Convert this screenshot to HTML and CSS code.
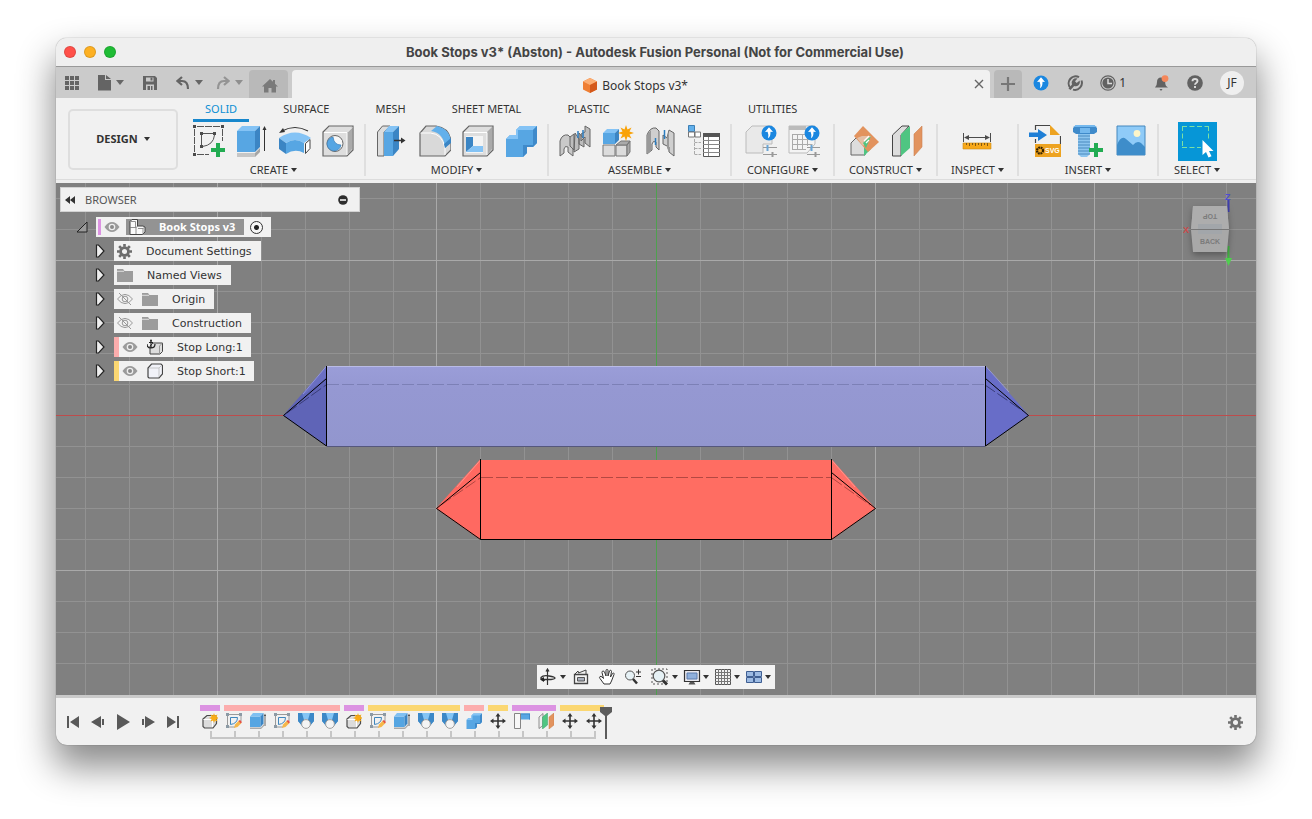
FILE: index.html
```html
<!DOCTYPE html>
<html lang="en">
<head>
<meta charset="utf-8">
<title>Book Stops v3*</title>
<link rel="stylesheet" href="styles.css">
</head>
<body>
<svg class="defs" aria-hidden="true">
  <symbol id="t-new" viewBox="0 0 16 16"><path d="M1 6 5 2.500h8l1.500 2v6L11 15H2.500L1 13.500z" fill="#dcdcdc" stroke="#4c4c4c" stroke-width="1.200"/><path d="M1.500 6.500h9L14 4M10.500 6.500V14" fill="none" stroke="#fff"/><path d="m12 0 .9 2.600L15.500 1.500 14.400 4 17 5l-2.600 1 1.100 2.500-2.600-1.100L12 10l-.9-2.600-2.600 1.100L9.600 6 7 5l2.600-1-1.100-2.500 2.600 1.100z" fill="#f9ab15"/></symbol>
  <symbol id="t-sketch" viewBox="0 0 16 16"><path d="M1.500 1v13H9M1 1.500h14V8" fill="none" stroke="#9a9a9a"/><path d="M4.500 4.500v7M4.500 4.500h7q0 6-7 7" fill="none" stroke="#3f86bd"/><path d="M0 0h3v3H0zM13 0h3v3h-3zM0 12h3v3H0z" fill="#8c9aa5"/><path d="m8 15 1-3.500 4-4 2.500 2.500-4 4z" fill="#f5b74b"/><path d="m12.500 8 1.500-1 2 2-1.200 1.500z" fill="#e34f45"/></symbol>
  <symbol id="t-extrude" viewBox="0 0 16 16"><path d="M0 14.500 11 14.500 14 11V13L11 16H0z" fill="#a9a9a9"/><path d="M0 3.500h10.500V14H0z" fill="#55a5e2"/><path d="M0 3.500 3 0h10.500l-3 3.500z" fill="#7fc0f2"/><path d="m10.500 3.500 3-3.500v10.500l-3 3.500z" fill="#3b85c4"/><path d="M15 2v11" stroke="#444" stroke-width=".8"/><path d="m15 .5 1 2.500h-2z" fill="#444"/></symbol>
  <symbol id="t-loft" viewBox="0 0 16 16"><path d="M0 0h16v8l-4 5H4L0 8z" fill="#3f8ccb"/><path d="M3 0h10l-2 8H5z" fill="#84c5f5"/><path d="M0 0h4l2 7-3 4-3-3zM16 0h-4l-2 7 3 4 3-3z" fill="#3c88c7"/><circle cx="8" cy="11" r="4.400" fill="#f4f4f4" stroke="#a0a0a0"/></symbol>
  <symbol id="t-combine" viewBox="0 0 32 32"><path d="M1 14 5 10h6V5l4-4h17v17l-4 4h-6v6l-4 4H1z" fill="#57a6e3"/><path d="m1 14 4-4h6V5l4-4h17l-4 4H13v9z" fill="#84c3f5"/><path d="m28 5 4-4v17l-4 4h-6v6l-4 4V20h10z" fill="#3f8aca"/></symbol>
  <symbol id="t-move" viewBox="0 0 16 16"><path d="M8 2v12M2 8h12" stroke="#333" stroke-width="1.600"/><path d="M8 0 5.500 3.500h5zM8 16l-2.500-3.500h5zM0 8l3.500-2.500v5zM16 8l-3.500-2.500v5z" fill="#333"/></symbol>
  <symbol id="t-align" viewBox="0 0 16 16"><path d="M.5.500h6v15h-6z" fill="#f7f7f7" stroke="#858585"/><path d="M7 .5h9v6H7z" fill="#57a6e3"/><path d="M7 .5h9v1H7zM15 .5h1v6h-1z" fill="#3f8aca"/></symbol>
  <symbol id="t-plane" viewBox="0 0 16 16"><path d="M1 4 5 .5v12L1 15.500z" fill="#eee" stroke="#777" stroke-width=".8"/><path d="m4.500 4 5-4v12l-5 4z" fill="#4fc582" stroke="#399f65" stroke-width=".5"/><path d="m11 4 5-4v12l-5 4z" fill="#e2935e" stroke="#c67c4a" stroke-width=".5"/></symbol>
  <symbol id="up" viewBox="0 0 16 16"><circle cx="8" cy="8" r="7.500" fill="#1b87e0"/><path d="M8 2.300 12 7l-2.500-.2Q9.700 12 7 13.200 8 10 6.600 6.800L4 7z" fill="#fff"/></symbol>
  <symbol id="eye" viewBox="0 0 16 12"><path d="M.5 6q3.500-5 7.500-5t7.500 5q-3.500 5-7.500 5T.5 6z" fill="#9b9b9b"/><circle cx="8" cy="6" r="3.300" fill="#eee"/><circle cx="8" cy="6" r="2" fill="#8a8a8a"/></symbol>
  <symbol id="eye-off" viewBox="0 0 16 12"><path d="M.5 6q3.500-4.600 7.500-4.600t7.500 4.600q-3.500 4.600-7.500 4.600T.5 6zM2 0l12 12" fill="none" stroke="#999"/><circle cx="8" cy="6" r="2.800" fill="none" stroke="#999"/></symbol>
  <symbol id="folder" viewBox="0 0 16 14"><path d="M0 1h6l1.500 2H16v11H0z" fill="#9c9c9c"/><path d="M0 3.300h7" stroke="#efefef" stroke-width=".8"/></symbol>
  <symbol id="gear" viewBox="0 0 16 16"><circle cx="8" cy="8" r="4.200" fill="none" stroke="currentColor" stroke-width="3"/><path d="M8 0v3M8 13v3M0 8h3M13 8h3M2.300 2.300l2.200 2.200M11.500 11.500l2.200 2.200M2.300 13.700l2.200-2.200M11.500 4.500l2.200-2.200" stroke="currentColor" stroke-width="2.800"/></symbol>
  <symbol id="twist" viewBox="0 0 10 14"><path d="M1.500 1h2l5.500 6-5.500 6h-2z" fill="#eee" stroke="#242424" stroke-width="1.200"/></symbol>
</svg>

<main class="window">
  <header class="titlebar">
    <div class="lights">
      <button class="light red" aria-label="Close"></button>
      <button class="light amber" aria-label="Minimize"></button>
      <button class="light green" aria-label="Zoom"></button>
    </div>
    <h1>Book Stops v3* (Abston) - Autodesk Fusion Personal (Not for Commercial Use)</h1>
  </header>

  <div class="tabbar">
    <div class="quick">
      <button aria-label="Data panel"><svg width="14" height="14" fill="#646464"><path d="M0 0h4v4H0zM5 0h4v4H5zM10 0h4v4h-4zM0 5h4v4H0zM5 5h4v4H5zM10 5h4v4h-4zM0 10h4v4H0zM5 10h4v4H5zM10 10h4v4h-4z"/></svg></button>
      <button class="drop file" aria-label="File"><svg width="14" height="16" fill="#646464"><path d="M1 0h7v5h6v10.500H1zM9 0l5 4H9z"/></svg><i class="caret"></i></button>
      <button class="save" aria-label="Save"><svg width="14" height="14"><path d="M0 0h12l2 2v12H0z" fill="#646464"/><path d="M3 1.500h7.500v4H3zM3 8.500h8V14H3z" fill="#cbcbcb"/><path d="M7.500 1.500h2v3h-2zM4.500 10H7v4H4.500zM8 10h1.500v4H8z" fill="#646464"/></svg></button>
      <button class="drop undo" aria-label="Undo"><svg width="14" height="14"><path d="M6 1 1.500 5 6 9M1.500 5H6q6 0 6 8" fill="none" stroke="#646464" stroke-width="2.200"/></svg><i class="caret"></i></button>
      <button class="drop redo" aria-label="Redo"><svg width="14" height="14"><path d="M8 1l4.500 4L8 9M12.500 5H8q-6 0-6 8" fill="none" stroke="#949494" stroke-width="2.200"/></svg><i class="caret pale"></i></button>
    </div>
    <button class="home" aria-label="Home"><svg width="16" height="14"><path d="M8 0 11 2.800V1h2v3.700L16 7.500h-2V13.500H9.500V9h-3v4.500H2v-6H0z" fill="#7a7a7a"/></svg></button>
    <div class="doc">
      <svg width="16" height="17" viewBox="0 0 16 17"><path d="m8 1 7 3.500v8L8 16l-7-3.500v-8z" fill="#ef7e33"/><path d="m8 1 7 3.500L8 8 1 4.500z" fill="#fcae74"/><path d="M8 8v8l7-3.500v-8z" fill="#d4591b"/></svg>
      <span>Book Stops v3*</span>
      <button class="close" aria-label="Close tab"><svg width="10" height="10"><path d="m1 1 8 8M9 1 1 9" stroke="#666" stroke-width="1.400"/></svg></button>
    </div>
    <button class="plus" aria-label="New design"><svg width="14" height="14"><path d="M7 0v14M0 7h14" stroke="#777" stroke-width="2.200"/></svg></button>
    <div class="status">
      <button class="updates" aria-label="Updates"><svg width="16" height="16"><use href="#up"/></svg></button>
      <button aria-label="Extensions"><svg width="16" height="16"><path d="M3 12.500A7 7 0 0 1 12 2.200M14.500 5.500A7 7 0 0 1 6 14.600" fill="none" stroke="#626262" stroke-width="2"/><path d="M1.500 13.500 5 9.500q-1-3 1-5 2-1.800 4.500-1L8 6.300 9.700 8l3-2.500q.8 2.500-1 4.500-2 1.800-4.500 1L3.500 15z" fill="#626262"/></svg></button>
      <button class="jobs" aria-label="Job status"><svg width="16" height="16"><circle cx="8" cy="8" r="7.200" fill="none" stroke="#626262" stroke-width="1.200"/><circle cx="8" cy="8" r="5.600" fill="#626262"/><path d="M8 4v4.500h4" fill="none" stroke="#ddd" stroke-width="1.500"/></svg><span>1</span></button>
      <button class="bell" aria-label="Notifications"><svg width="16" height="16"><path d="M1 12.500Q3 11 3 7q0-4.500 4-4.500T11.200 7Q11 11 14 12.500z" fill="#626262"/><path d="M5.500 14h3L7 16z" fill="#626262"/><circle cx="11" cy="3.600" r="3.400" fill="#f5875a"/></svg></button>
      <button class="help" aria-label="Help"><svg width="16" height="16"><circle cx="8" cy="8" r="7.800" fill="#626262"/><path d="M5.500 6.300Q5.500 4 8 4t2.500 2.100q0 1.200-1.300 1.900-1.200.7-1.200 1.800M8 11v2" fill="none" stroke="#ddd" stroke-width="1.900"/></svg></button>
      <button class="avatar">JF</button>
    </div>
  </div>

  <section class="ribbon">
    <button class="design">DESIGN <i class="caret dark"></i></button>
    <div class="tools">
      <nav class="tabs">
        <button class="on">SOLID</button><button>SURFACE</button><button>MESH</button><button>SHEET METAL</button><button>PLASTIC</button><button>MANAGE</button><button>UTILITIES</button>
      </nav>
      <div class="groups">
        <div class="group first">
          <div class="icons">
            <button aria-label="Create Sketch"><svg width="32" height="32"><path d="M1.500 4v23M4 1.500h23M29.500 4v12M4 29.500h12" fill="none" stroke="#555" stroke-dasharray="7 1"/><path d="M8.500 10v10M9 8.500h11M21.500 10q-1 10-12 11.500" fill="none" stroke="#555"/><path d="M0 0h3v3H0zM28 0h3v3h-3zM0 28h3v3H0zM7 7h3v3H7zM20 7h3v3h-3zM7 20h3v3H7z" fill="#4b4b4b"/><path d="M23 18h4v5h5v4h-5v5h-4v-5h-5v-4h5z" fill="#22ac52"/></svg></button>
            <button aria-label="Extrude"><svg width="32" height="32"><path d="M1 28h18l5-5v4l-5 5H1z" fill="#a5a5a5"/><path d="M1 28h18v4H1z" fill="#c6c6c6"/><path d="M1 6h18v21H1z" fill="#57a6e3"/><path d="m1 6 5-5h18l-5 5z" fill="#84c3f5"/><path d="m19 6 5-5v21l-5 5z" fill="#3b85c4"/><path d="M28.500 3v23" stroke="#333"/><path d="m28.500 1 2 4h-4z" fill="#333"/></svg></button>
            <button aria-label="Revolve"><svg width="32" height="32"><path d="M3 6Q16-1 29 6" fill="none" stroke="#333" stroke-width="1.200"/><path d="m0 8 4-5 2 4z" fill="#333"/><path d="M0 13q16-11 32 0l-7 5q-9-6-18 0z" fill="#84c3f5"/><path d="m0 13 7 5v11l-7-5z" fill="#3b85c4"/><path d="M7 18q9-6 18 0v10q-9-5-18 1z" fill="#57a6e3"/><path d="m26.500 18.500 4.500-4v9l-4.500 5z" fill="#fff" stroke="#444"/></svg></button>
            <button aria-label="Hole"><svg width="32" height="32"><path d="M1 31V7l6-6h24v24l-6 6z" fill="#dedede" stroke="#666" stroke-width="1.200"/><path d="m25 7 5-5v22l-5 6z" fill="#aaa"/><path d="M2 7.500h23M25 7.500V30M25 7.500l5-5" fill="none" stroke="#fff"/><circle cx="13" cy="18.500" r="8" fill="#f7f7f7" stroke="#666"/><path d="M11 12a7 7 0 1 0 8 8q-7 0-8-8z" fill="#57a6e3" stroke="#3b7db5" stroke-width=".7"/></svg></button>
          </div>
          <button class="label">CREATE<i class="caret dark"></i></button>
        </div>
        <div class="group">
          <div class="icons">
            <button aria-label="Press Pull"><svg width="32" height="32"><path d="M1.500 31V7l5-6H14L8 7v24z" fill="#ddd" stroke="#666"/><path d="M8 7h9v24H8z" fill="#57a6e3"/><path d="m8 7 5-6h10l-6 6z" fill="#84c3f5"/><path d="m17 7 6-6v23l-6 7z" fill="#3b85c4"/><path d="M18 15.500h8" stroke="#333" stroke-width="1.400"/><path d="m25 12.500 4.500 3-4.500 3z" fill="#333"/></svg></button>
            <button aria-label="Fillet"><svg width="32" height="32"><path d="M1 31V8l6-7h10q14 2 15 16v8l-6 6z" fill="#d9d9d9" stroke="#666" stroke-width="1.200"/><path d="M1.500 8h10q12 1 14.500 15v7" fill="none" stroke="#fff"/><path d="m12 6 6-5q13 3 14 16l-6 6Q25 8 12 6z" fill="#62b0eb"/><path d="m25 19 7-6v5l-6 5z" fill="#3b85c4"/></svg></button>
            <button aria-label="Shell"><svg width="32" height="32"><path d="M1 31V7l6-6h24v24l-6 6z" fill="#dedede" stroke="#666" stroke-width="1.200"/><path d="m25 7 5-5v22l-5 6z" fill="#aaa"/><path d="M2 7.500h23V30" fill="none" stroke="#fff"/><path d="M4 11h17v17H4z" fill="#f4f4f4"/><path d="M4 12h7v9l-7 6z" fill="#3b85c4"/><path d="M11 21h10v6H4z" fill="#84c3f5"/></svg></button>
            <button aria-label="Combine"><svg width="32" height="32"><use href="#t-combine"/></svg></button>
          </div>
          <button class="label">MODIFY<i class="caret dark"></i></button>
        </div>
        <div class="group">
          <div class="icons">
            <button aria-label="Joint Origin"><svg width="32" height="32"><path d="M1 31V16q2-7 8-6l5 5v16l-5-4v-5q-3-2-4 2v4z" fill="#c9c9c9" stroke="#656565"/><path d="m11 12 4-3v16l-4-4zM16 8l4 6v10l-5 3zM20 8l5 6v8l-5-3zM26 1l5 3v18l-5-4V12l-4 4V9l4-2z" fill="#bdbdbd" stroke="#656565"/><path d="M19 6v7M24 5v8" stroke="#2b7dc0" stroke-width="1.500"/></svg></button>
            <button aria-label="New Component"><svg width="32" height="32"><path d="M1 20h12v11H1zM14 20h11v11H14z" fill="#dcdcdc" stroke="#777"/><path d="m14 20 5-4h9l-3 4zM25 20l3-4v11l-3 4z" fill="#aaa" stroke="#777"/><path d="M1 8h12v11H1z" fill="#57a6e3"/><path d="m1 8 4-4h12l-4 4z" fill="#84c3f5"/><path d="m13 8 4-4v11l-4 4z" fill="#3b85c4"/><path d="m24 0 1.500 4.500 4-2-2 4L32 8l-4.500 1.500 2 4-4-2L24 16l-1.500-4.500-4 2 2-4L16 8l4.500-1.500-2-4 4 2z" fill="#f9a207"/></svg></button>
            <button aria-label="Joint"><svg width="32" height="32"><path d="M2 29V10q3-8 9-7l3 3v19l-3-3v-5q-3-2-4 2v6z" fill="#cfcfcf" stroke="#656565"/><path d="m18 10 4 3 2-8 5 3v23l-5-4v-5l-6-3z" fill="#cfcfcf" stroke="#656565"/><path d="M2 29V10l4-5v21zM24 6v21l-2-4V13z" fill="#999"/><path d="M10.500 13v7M19.500 5v9" stroke="#2b7dc0" stroke-width="1.500"/></svg></button>
            <button aria-label="Bill of Materials"><svg width="32" height="32"><path d="M.5.500h6v6h-6z" fill="#62b0eb" stroke="#3c7fb5"/><path d="M.5 7h6v5h-6zM7 7h5.500v5H7z" fill="#fff" stroke="#777"/><path d="M6.500 14v16M6.500 17.500H13M6.500 23.500H13M6.500 29.500H13" stroke="#aaa" stroke-dasharray="3 1" fill="none"/><path d="M15.500 8.500h16v23h-16z" fill="#fff" stroke="#555"/><path d="M15 8h17v4H15z" fill="#555"/><path d="M15 15.500h17M15 19.500h17M15 23.500h17M15 27.500h17M20.500 12v19" stroke="#888"/></svg></button>
          </div>
          <button class="label">ASSEMBLE<i class="caret dark"></i></button>
        </div>
        <div class="group short">
          <div class="icons">
            <button aria-label="Configure"><svg width="32" height="32"><path d="M1 28V7l6-6h20v18H18v9z" fill="#e9e9e9" stroke="#bbb"/><path d="M18 22.500h14M18 29.500h14" stroke="#999"/><path d="M22.500 20v6" stroke="#6aa6d6" stroke-width="2"/><path d="M27.500 27v5" stroke="#999" stroke-width="2"/><use href="#up" x="16" y="0" width="16" height="16"/></svg></button>
            <button aria-label="Configuration Table"><svg width="32" height="32"><path d="M1 1h26v18l-8 9H1z" fill="#f4f4f4" stroke="#bbb"/><path d="M1 1h17v4H1z" fill="#bbb"/><path d="M4.500 9.500h20M4.500 14.500h20M4.500 19.500h20M4.500 24.500H18M4.500 9v16M9.500 9v16M14.500 9v16M19.500 9v12" stroke="#aaa" fill="none"/><path d="M19 22.500h13M19 29.500h13" stroke="#999"/><path d="M23.500 20v6" stroke="#6aa6d6" stroke-width="2"/><path d="M27.500 27v5" stroke="#999" stroke-width="2"/><use href="#up" x="16" y="0" width="16" height="16"/></svg></button>
          </div>
          <button class="label">CONFIGURE<i class="caret dark"></i></button>
        </div>
        <div class="group short">
          <div class="icons">
            <button aria-label="Offset Plane"><svg width="32" height="32"><path d="M3 30V18l5-5h12l-3 17z" fill="#ddd" stroke="#666"/><path d="M16 20h7v4l-7 7z" fill="#4fc582"/><path d="M15 1 31 17 20 27 6 11z" fill="#e2935e"/><path d="m9 13 5-2h9l-5 7-3 3z" fill="#e6ccb8" opacity=".8"/><path d="m15 18 8-7-5 12z" fill="#4fc582"/><path d="m16 16 5-5M18 18l3-3" stroke="#fff" stroke-width="1.200"/></svg></button>
            <button aria-label="Midplane"><svg width="32" height="32"><path d="M1.500 31V10L11 1h7L10 10v21z" fill="#ddd" stroke="#444"/><path d="m10 9 9-8v22l-9 8z" fill="#4fc582"/><path d="m23 9 8-8v21l-8 9z" fill="#e2935e" stroke="#cc8250" stroke-width=".6"/></svg></button>
          </div>
          <button class="label">CONSTRUCT<i class="caret dark"></i></button>
        </div>
        <div class="group short">
          <div class="icons">
            <button aria-label="Measure"><svg width="32" height="32"><path d="M2.500 8v9M29.500 8v9M4 12.500h24" stroke="#4c4c4c"/><path d="m3 12.500 5-2.500v5zM29 12.500 24 10v5z" fill="#4c4c4c"/><path d="M2 18h28v6H2z" fill="#f7a81b" stroke="#cf8a12" stroke-width=".6"/><path d="M5.500 18v2M8.500 18v3M11.500 18v2M14.500 18v3M17.500 18v2M20.500 18v3M23.500 18v2M26.500 18v3" stroke="#805813"/></svg></button>
          </div>
          <button class="label">INSPECT<i class="caret dark"></i></button>
        </div>
        <div class="group">
          <div class="icons">
            <button aria-label="Insert SVG"><svg width="32" height="32"><path d="M6.500 5V.5H21M31.500 11v8" fill="none" stroke="#444" stroke-width="1.200"/><path d="M6.500 14v4" stroke="#444" stroke-width="1.200"/><path d="M21 0v10h10z" fill="#eda321"/><path d="M0 7.500h9V4l9 6-9 6v-4H0z" fill="#1f7fd6"/><path d="M6 19h26v13H6z" fill="#eda321"/><circle cx="11" cy="25.500" r="3" fill="none" stroke="#332200" stroke-width="2.200" stroke-dasharray="1.800 .6"/><text x="16" y="28" class="svgtag">SVG</text></svg></button>
            <button aria-label="Insert Fastener"><svg width="32" height="32"><path d="M6 8h12v21l-3 3H9l-3-3z" fill="#8cc5ef"/><path d="M6 11h12M6 14h12M6 17h12M6 20h12M6 23h12M6 26h12M6 29h12" stroke="#4a8abf"/><path d="m1 3 3-3h18l3 3v4l-3 2H4L1 7z" fill="#3f8aca"/><path d="M1 2h24l-3-2H4zM8 3h10v5H8z" fill="#75b9ee"/><path d="M22 18h4v5h5v4h-5v5h-4v-5h-5v-4h5z" fill="#22ac52"/></svg></button>
            <button aria-label="Canvas"><svg width="32" height="32"><path d="M2 1h28v29H2z" fill="#8fcbf8" stroke="#4587bd"/><path d="M2 20Q6 10 11 14l7 6q4-5 8-2l4 4v8H2z" fill="#3e8dca"/><circle cx="22" cy="8.500" r="3.400" fill="#fdf6c9"/></svg></button>
          </div>
          <button class="label">INSERT<i class="caret dark"></i></button>
        </div>
        <div class="group select">
          <div class="icons">
            <button class="picked" aria-label="Select"><svg width="39" height="39"><path d="M4 4.500h27M4.500 4v21M30.500 4v14M4 25.500h19" fill="none" stroke="#7be0a4" stroke-dasharray="5 2.500"/><path d="M24.500 18v15l3.500-3 2.500 5.500 3-1.300-2.500-5.200h4.500z" fill="#fff"/></svg></button>
          </div>
          <button class="label">SELECT<i class="caret dark"></i></button>
        </div>
      </div>
    </div>
  </section>

  <section class="canvas">
    <svg class="scene" viewBox="56 183 1200 512" preserveAspectRatio="xMidYMid slice">
      <defs><linearGradient id="lg" x1="0" y1="0" x2="0" y2="1"><stop offset="0" stop-color="#9a9dd8"/><stop offset=".3" stop-color="#9598d2"/><stop offset="1" stop-color="#9296ce"/></linearGradient></defs>
      <path class="grid" d="M85.500 183v512M129.500 183v512M173.500 183v512M261.500 183v512M305.500 183v512M349.500 183v512M393.500 183v512M480.500 183v512M524.500 183v512M568.500 183v512M612.500 183v512M700.500 183v512M743.500 183v512M787.500 183v512M831.500 183v512M919.500 183v512M963.500 183v512M1007.500 183v512M1051.500 183v512M1138.500 183v512M1182.500 183v512M1226.500 183v512M56 198.500h1200M56 229.500h1200M56 291.500h1200M56 322.500h1200M56 353.500h1200M56 384.500h1200M56 446.500h1200M56 477.500h1200M56 508.500h1200M56 539.500h1200M56 601.500h1200M56 632.500h1200M56 663.500h1200"/>
      <path class="grid major" d="M217.500 183v512M436.500 183v512M875.500 183v512M1094.500 183v512M56 260.500h1200M56 570.500h1200"/>
      <path d="M56 415.500h1200" stroke="#bd4c4c"/>
      <path d="M656.500 183v512" stroke="#4fa04f"/>
      <path d="M326.500 366 283 415.500 326.500 446z" fill="#5f64b7"/><path d="M326.500 366 302 396l24.500-18z" fill="#6a6fc2"/>
      <path d="M985.500 366 1029 415.500 985.500 446z" fill="#686dc8"/>
      <path d="M326.500 366h659v80h-659z" fill="url(#lg)"/>
      <path d="M327 366.500h658" stroke="#b9bbe6"/><path d="M327 446.500h658" stroke="#55577c"/>
      <path d="M326.500 366 303 394M985.500 366 1009 392" stroke="#9da0e4" stroke-width=".8"/>
      <path class="hidden" d="M327 384.500h658" stroke="#7c80b6"/><path class="hidden" d="M287 413 326 385M985 385l38 26" stroke="#393c78"/>
      <path class="edge" d="M326.500 366v80L283.500 415.500 326.500 378.500M985.500 366v80l43-30.500L985.500 378.500"/>
      <path d="M480.500 459 436 508.500 480.500 540z" fill="#ff6961"/><path d="M831.500 459 875.500 508.500 831.500 540z" fill="#ff6e66"/>
      <path d="M480.500 460h351v80h-351z" fill="#ff6d62"/>
      <path d="M480.500 460 457 487M831.500 460 855 487" stroke="#ff9d94" stroke-width=".8"/>
      <path class="hidden" d="M481 477.500h350M441 505l39-27M832 478l38 27" stroke="#b44842"/>
      <path class="edge" d="M480.500 459v80.500L436.500 508.500 480.500 472.500M831.500 459v80.500l44-31-44-36M480.500 539.500h351"/>
    </svg>

    <aside class="browser">
      <header><button aria-label="Collapse"><svg width="10" height="8"><path d="M5 0v8L0 4zM10 0v8L5 4z" fill="#333"/></svg></button><h2>BROWSER</h2><button aria-label="Hide"><svg width="10" height="10"><circle cx="5" cy="5" r="4.800" fill="#2d2d2d"/><path d="M2 5h6" stroke="#fff" stroke-width="1.600"/></svg></button></header>
      <ul class="tree">
        <li class="root"><button aria-label="Collapse node"><svg width="12" height="12"><path d="M11 1v10H1z" fill="#9a9a9a" stroke="#222"/></svg></button>
          <div class="node"><b class="stripe violet"></b><svg width="16" height="12"><use href="#eye"/></svg><span class="chosen"><svg width="17" height="16"><path d="M1 6V2.500L3 .5h5.500V7H14l2 1v5l-2.500 2.500H1z" fill="#fafafa" stroke="#444"/><path d="M1 8.500h6V15M7 8.500l2-1.500M9 9.500h5V15M14 9.500l2-1.500M1.500 2.500h5V8" fill="none" stroke="#777" stroke-width=".8"/></svg>Book Stops v3</span><input type="radio" checked aria-label="Activate Book Stops v3"></div></li>
        <li><button aria-label="Expand"><svg width="10" height="14"><use href="#twist"/></svg></button><div class="node"><svg class="gear" width="15" height="15"><use href="#gear"/></svg><span>Document Settings</span></div></li>
        <li><button aria-label="Expand"><svg width="10" height="14"><use href="#twist"/></svg></button><div class="node"><svg width="16" height="14"><use href="#folder"/></svg><span>Named Views</span></div></li>
        <li><button aria-label="Expand"><svg width="10" height="14"><use href="#twist"/></svg></button><div class="node"><svg width="16" height="12"><use href="#eye-off"/></svg><svg width="16" height="14"><use href="#folder"/></svg><span>Origin</span></div></li>
        <li><button aria-label="Expand"><svg width="10" height="14"><use href="#twist"/></svg></button><div class="node"><svg width="16" height="12"><use href="#eye-off"/></svg><svg width="16" height="14"><use href="#folder"/></svg><span>Construction</span></div></li>
        <li><button aria-label="Expand"><svg width="10" height="14"><use href="#twist"/></svg></button><div class="node part"><b class="stripe pink"></b><svg width="16" height="12"><use href="#eye"/></svg><svg width="16" height="16"><path d="M3 7 6 4h9.500v8.500L13 15H3z" fill="#ddd" stroke="#444"/><path d="M12.500 7v8M12.500 7 15 4.500" stroke="#999"/><path d="M4 2v7M2 3.500h4M0 5q0 4 4 4t4-4" fill="none" stroke="#222" stroke-width="1.200"/><circle cx="4" cy="1.500" r="1" fill="#222"/></svg><span>Stop Long:1</span></div></li>
        <li><button aria-label="Expand"><svg width="10" height="14"><use href="#twist"/></svg></button><div class="node part"><b class="stripe gold"></b><svg width="16" height="12"><use href="#eye"/></svg><svg width="16" height="16"><path d="M1 14V5l3.500-4H14l1.500 1.500V11L12 15H2z" fill="#f1f2f8" stroke="#444" stroke-width="1.200"/><path d="M12 5v9M12 5l3-3M2 5h10" fill="none" stroke="#bbb" stroke-width=".8"/></svg><span>Stop Short:1</span></div></li>
      </ul>
    </aside>

    <svg class="cube" width="64" height="84" viewBox="1176 188 64 84">
      <path d="M1228.500 200v12" stroke="#3f3fae" stroke-width="2"/><text x="1225" y="200" class="axis" fill="#4e4ed0">Z</text>
      <text x="1183" y="233" class="axis" fill="#d04b4b">X</text>
      <path d="M1228.500 246v14" stroke="#43b843" stroke-width="2"/><path d="M1225 258h7l-3.500 8z" fill="#4fd04f"/>
      <path class="cubeface" d="M1193 206h34l2 24-2 22h-34l-2-22z" fill="#a8a8a8"/>
      <path d="M1193 206h34l2 24h-38z" fill="#adadad"/><path d="M1198 224h24v10h-24z" fill="#a2a6aa"/>
      <path d="M1191 229.500h38" stroke="#777"/>
      <text class="facetext" x="1210" y="219" transform="rotate(180 1210 216.500)">TOP</text>
      <text class="facetext" x="1210" y="244">BACK</text>
    </svg>

    <div class="navbar">
      <button aria-label="Orbit"><svg width="18" height="18"><path d="M8.500 1v16M7 3.500 8.500 1 10 3.500" stroke="#333" fill="none" stroke-width="1.200"/><path d="M6 12.500Q1 11 2 9.500 4 7 10 8q6 1 6 2t-4 1.500H5" fill="none" stroke="#333" stroke-width="1.300"/><path d="m1 11.500 4-2.500v5z" fill="#222"/></svg><i class="caret dark"></i></button>
      <button class="look" aria-label="Look At"><svg width="18" height="18"><path d="M2.500 6.500h13v9h-13z" fill="#f5f5f5" stroke="#444" stroke-width="1.300"/><path d="M5.500 9.500h7v3.500h-7z" fill="#aab0bd" stroke="#555"/><path d="m3 6 3-3 .5 2L14 2v4" fill="none" stroke="#444"/></svg></button>
      <button class="pan" aria-label="Pan"><svg width="18" height="18"><path d="M6 16 2 10.500q-1-1.500 0-2t2 .5l1.500 1.500L4 4.500q0-1.500 1-1.500t1.500 1L8 8V2.500q0-1 1-1t1 1V8l1.500-5q.5-1 1.300-.7t.7 1.200L12.500 9l2-3.500q.6-.8 1.300-.3t.2 1.300L13.500 13 12 16z" fill="#fff" stroke="#333"/></svg></button>
      <button class="zoomer" aria-label="Zoom"><svg width="18" height="18"><circle cx="6" cy="7.500" r="4.500" fill="#e6f1f5" stroke="#555"/><path d="m9 11 4 4.500" stroke="#333" stroke-width="2.500"/><path d="M14.500 1.500v5M12 4h5M12 8.500h5" stroke="#333"/></svg></button>
      <button class="fit" aria-label="Fit"><svg width="18" height="18"><path d="M1 3V1h15v15H1V3" fill="none" stroke="#555" stroke-dasharray="2 2"/><circle cx="8" cy="8" r="5.800" fill="#e6f1f5" stroke="#555" stroke-width="1.200"/><path d="m12 12.500 4 4" stroke="#333" stroke-width="3"/></svg><i class="caret dark"></i></button>
      <button class="screen" aria-label="Display Settings"><svg width="18" height="18"><path d="M1.500 2.500h15v11h-15z" fill="#e8e8ee" stroke="#333" stroke-width="1.200"/><path d="M4 5h10v6H4z" fill="#8fb0dc" stroke="#5c7dae"/><path d="M7 14h4l1.500 2.500h-7z" fill="#555"/></svg><i class="caret dark"></i></button>
      <button class="gridset" aria-label="Grid Settings"><svg width="18" height="18"><path d="M1.500 1.500h15v15h-15z" fill="#f3f3f3" stroke="#555"/><path d="M4.500 1v16M7.500 1v16M10.500 1v16M13.500 1v16M1 4.500h16M1 7.500h16M1 10.500h16M1 13.500h16" stroke="#777"/></svg><i class="caret dark"></i></button>
      <button class="views" aria-label="Viewports"><svg width="18" height="18"><path d="M1.500 3.500h7v5h-7zM9.500 3.500h7v5h-7zM1.500 9.500h7v5h-7zM9.500 9.500h7v5h-7z" fill="#9dbbe3" stroke="#3f5f93"/></svg><i class="caret dark"></i></button>
    </div>
  </section>

  <footer class="timeline">
    <div class="play">
      <button aria-label="Go to start"><svg width="14" height="16" fill="#595959"><path d="M1 2h2v12H1zM13 2v12L4 8z"/></svg></button>
      <button aria-label="Step back"><svg width="14" height="16" fill="#595959"><path d="M10 2v12L0 8zM11 5h2v6h-2z"/></svg></button>
      <button aria-label="Play"><svg width="14" height="16" fill="#595959"><path d="m1 0 13 8-13 8z"/></svg></button>
      <button aria-label="Step forward"><svg width="14" height="16" fill="#595959"><path d="M4 2v12l10-6zM1 5h2v6H1z"/></svg></button>
      <button aria-label="Go to end"><svg width="14" height="16" fill="#595959"><path d="M11 2h2v12h-2zM1 2v12l9-6z"/></svg></button>
    </div>
    <div class="track">
      <div class="runs">
        <div class="run violet"><svg><use href="#t-new"/></svg></div>
        <div class="run pink"><svg><use href="#t-sketch"/></svg><svg><use href="#t-extrude"/></svg><svg><use href="#t-sketch"/></svg><svg><use href="#t-loft"/></svg><svg><use href="#t-loft"/></svg></div>
        <div class="run violet"><svg><use href="#t-new"/></svg></div>
        <div class="run gold"><svg><use href="#t-sketch"/></svg><svg><use href="#t-extrude"/></svg><svg><use href="#t-loft"/></svg><svg><use href="#t-loft"/></svg></div>
        <div class="run pink"><svg><use href="#t-combine"/></svg></div>
        <div class="run gold"><svg><use href="#t-move"/></svg></div>
        <div class="run violet"><svg><use href="#t-align"/></svg><svg><use href="#t-plane"/></svg></div>
        <div class="run gold"><svg><use href="#t-move"/></svg><svg><use href="#t-move"/></svg></div>
      </div>
      <div class="ticks"></div>
    </div>
    <svg class="marker" width="12" height="32"><path d="M0 0h12v5L7 9v23H5V9L0 5z" fill="#5c5c5c"/></svg>
    <button class="settings" aria-label="Timeline settings"><svg width="15" height="15"><use href="#gear"/></svg></button>
  </footer>
</main>
</body>
</html>
```
FILE: styles.css
```css
* { box-sizing: border-box; }
body {
  margin: 0;
  min-height: 100vh;
  display: flex;
  flex-direction: column;
  padding: 38px 56px 74px;
  background: #fff;
  color: #333;
  font-family: "Noto Sans", "Open Sans", sans-serif;
  font-size: 11px;
}
.defs { display: none; }
svg { display: block; flex: none; }
button { margin: 0; padding: 0; border: 0; background: none; color: inherit; font: inherit; display: flex; align-items: center; }
h1, h2, ul { margin: 0; padding: 0; }
.window {
  flex: 1;
  display: flex;
  flex-direction: column;
  background: #f1f1f1;
  border-radius: 11px;
  overflow: hidden;
  box-shadow: 0 0 1px rgba(0, 0, 0, .6), 0 20px 36px 2px rgba(0, 0, 0, .46);
}
.caret { width: 0; height: 0; border: 4px solid transparent; border-top: 5px solid #666; border-bottom: 0; }
.caret.pale { border-top-color: #8f8f8f; }
.caret.dark { border-width: 4px 3px 0; border-top-color: #333; }

.titlebar { display: grid; grid-template-columns: 60px 1fr 60px; align-items: center; height: 28px; padding: 0 10px 0 8px; background: #efefef; }
.titlebar h1 { text-align: center; font: 700 13px/16px Inter, sans-serif; color: #444; white-space: nowrap; }
.lights { display: flex; gap: 8px; }
.light { width: 12px; height: 12px; border-radius: 50%; border: 1px solid rgba(0, 0, 0, .12); }
.light.red { background: #ff5049; }
.light.amber { background: #fdb022; }
.light.green { background: #1fbc35; }

.tabbar { display: flex; align-items: flex-end; height: 32px; background: #cbcbcb; border-top: 1px solid #999; }
.quick { display: flex; align-items: center; width: 193px; height: 31px; padding-left: 9px; }
.quick button { height: 16px; }
.drop { gap: 5px; }
.file { margin-left: 18px; }
.save { margin-left: 19px; }
.undo { margin-left: 19px; }
.redo { margin-left: 13px; }
.home { justify-content: center; width: 39px; height: 28px; padding: 4px 0 0 2px; background: #b9b9b9; border-radius: 4px 4px 0 0; }
.doc { flex: 1; display: flex; align-items: center; justify-content: center; gap: 4px; height: 28px; margin: 0 4px; padding: 3px 12px 0 0; background: #f1f1f1; border-radius: 4px 4px 0 0; font: 12px/16px "Noto Sans", sans-serif; position: relative; }
.close { position: absolute; right: 6px; top: 9px; }
.plus { justify-content: center; width: 28px; height: 28px; background: #b9b9b9; border-radius: 4px 4px 0 0; }
.status { display: flex; align-items: center; height: 31px; padding: 0 12px 0 11px; font-size: 12px; }
.status button { margin-right: 17px; }
.status .updates { margin-right: 18px; }
.jobs { gap: 3px; }
.status .jobs { margin-right: 28px; }
.status .avatar { justify-content: center; width: 24px; height: 24px; margin: 0; border-radius: 50%; background: #efefef; }

.ribbon { display: flex; height: 85px; padding: 0 12px; border-bottom: 3px solid #efefef; box-shadow: inset 0 -1px #dcdcdc; }
.design { flex: none; justify-content: center; gap: 6px; width: 110px; height: 61px; margin: 11px 15px 0 0; padding-bottom: 2px; border: 2px solid #dedede; border-radius: 5px; font-weight: 700; }
.tools { flex: 1; display: flex; flex-direction: column; }
.tabs { display: flex; gap: 22px; height: 24px; }
.tabs button { height: 24px; padding: 0 12px; border-bottom: 3px solid transparent; }
.tabs .on { color: #0d8fd4; border-bottom-color: #1787cc; }
.groups { display: flex; height: 56px; padding-top: 2px; }
.group { display: flex; flex-direction: column; align-items: center; gap: 6px; height: 52px; padding: 1px 10px 0; border-right: 2px solid #dfdfdf; }
.group.first { padding-left: 0; }
.group.short { padding: 1px 13px 0; }
.group.select { padding: 1px 15px 0; border: 0; }
.icons { display: flex; gap: 11px; height: 32px; align-items: center; }
.label { gap: 3px; line-height: 14px; white-space: nowrap; }
.picked { background: #0696d7; }
.svgtag { font: 700 7px "Liberation Sans", sans-serif; fill: #fff; }

.canvas { position: relative; flex: 1; min-height: 420px; background: #808080; }
.scene { position: absolute; inset: 0; width: 100%; height: 100%; }
.grid { stroke: #929292; }
.grid.major { stroke: #a9a9a9; }
.hidden { fill: none; stroke-dasharray: 12 3; }
.edge { fill: none; stroke: #000; }
.browser { position: relative; width: 304px; padding: 4px 0 0 4px; font: 11px/16px "DejaVu Sans", sans-serif; }
.browser header { display: flex; align-items: center; height: 25px; padding: 0 11px 0 4px; background: #f1f1f1; border: 1px solid #d2d2d2; }
.browser h2 { flex: 1; margin-left: 10px; font: 11px/16px "Noto Sans", sans-serif; color: #555; }
.tree { list-style: none; display: flex; flex-direction: column; gap: 4px; padding: 5px 0 0 35px; }
.tree li { display: flex; align-items: center; gap: 9px; }
.tree .root { gap: 8px; margin-left: -19px; }
.node { display: flex; align-items: center; gap: 9px; height: 20px; padding: 0 9px 0 3px; background: #f1f1f1; }
.node span { margin-left: 5px; line-height: 18px; padding-top: 1px; }
.part { padding: 0 8px 0 0; }
.stripe { width: 5px; height: 20px; }
.part .stripe { margin-right: -6px; }
.root .node { gap: 6px; padding: 0 8px 0 2px; }
.root .stripe { width: 3px; height: 16px; margin-right: -3px; }
.node .chosen { display: flex; align-items: center; gap: 13px; height: 16px; margin: 0; padding: 0 9px 0 3px; background: #939393; color: #fff; font: 700 11px/16px "Noto Sans", sans-serif; }
.node input { appearance: none; width: 13px; height: 13px; margin: 0; border: 1px solid #333; border-radius: 50%; background: radial-gradient(#222 0 2px, #f6f6f6 3px); }
.gear { color: #6c6c6c; }
.violet { background: #dc93e2; }
.pink { background: #fcadad; }
.gold { background: #fbd772; }
.cube { position: absolute; top: 5px; right: 16px; }
.cubeface { filter: drop-shadow(0 3px 3px rgba(0, 0, 0, .3)); }
.axis { font: 700 9px "Liberation Sans", sans-serif; }
.facetext { font: 700 7px "Liberation Sans", sans-serif; fill: #7b7b7b; text-anchor: middle; }
.navbar { position: absolute; bottom: 6px; left: 50%; transform: translateX(-50%); display: flex; align-items: center; gap: 8px; height: 24px; padding: 0 4px 0 2px; background: #f3f3f3; }
.navbar button { gap: 3px; }
.navbar .look { margin-left: -2px; }
.navbar .fit { margin-left: 1px; }
.navbar .screen, .navbar .gridset, .navbar .views { gap: 2px; margin-left: -3px; }

.timeline { display: flex; align-items: flex-start; height: 50px; padding: 7px 13px 0 10px; border-top: 3px solid #cacaca; }
.play { display: flex; gap: 11px; margin: 9px 20px 0 0; }
.runs { display: flex; gap: 4px; }
.run { display: flex; gap: 8px; padding: 8px 2px 0; background-size: 100% 6px; background-repeat: no-repeat; background-color: transparent; }
.run.violet { background-image: linear-gradient(#dc93e2, #dc93e2); }
.run.pink { background-image: linear-gradient(#fcadad, #fcadad); }
.run.gold { background-image: linear-gradient(#fbd772, #fbd772); }
.run svg { width: 16px; height: 16px; }
.ticks { height: 8px; margin: 2px 8px 0 10px; border-bottom: 2px solid #c6c6c6; background: repeating-linear-gradient(90deg, #c6c6c6 0 2px, transparent 2px 24px); }
.marker { margin: 2px 0 0 -4px; }
.settings { margin: 10px 0 0 auto; color: #707070; }
```
